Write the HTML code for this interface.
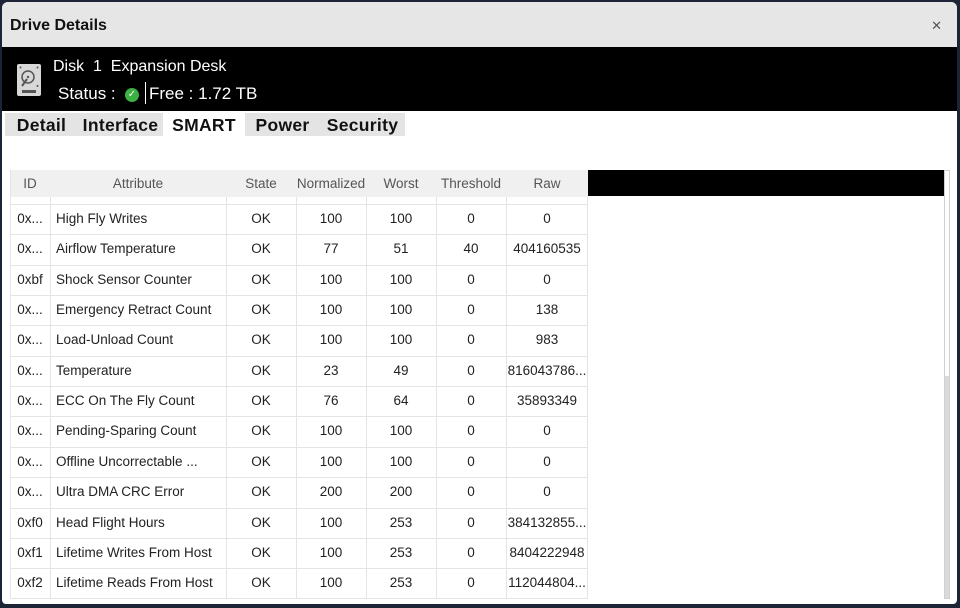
<!DOCTYPE html>
<html><head><style>
*{margin:0;padding:0;box-sizing:border-box}
body{width:960px;height:608px;background:#1c2436;position:relative;overflow:hidden;font-family:"Liberation Sans",sans-serif}
.win{position:absolute;left:2px;top:2px;width:955px;height:602px;background:#fff;border-radius:6px 6px 4px 4px;overflow:hidden}
.title{position:absolute;left:0;top:0;width:100%;height:45px;background:#e6e6e6;}
.title span{position:absolute;left:8px;top:15px;font-size:16px;font-weight:bold;color:#111}
.close{position:absolute;right:15px;top:16px;font-size:13px;color:#555}
.hdr{position:absolute;left:0;top:45px;width:100%;height:64px;background:#000;color:#fff}
.tabs{position:absolute;top:111px;height:23px;font-size:17.5px;font-weight:bold;color:#111}
.tab{position:absolute;top:0;height:23px;background:#e4e4e4;padding-top:2px;text-align:center;letter-spacing:0.3px}
.grid{position:absolute;left:0;top:0}
.c{position:absolute;font-size:13.5px;color:#222;text-align:center;white-space:nowrap}
.h{color:#555}
.vl{position:absolute;width:1px;background:#e4e4e4}
.hl{position:absolute;height:1px;background:#e4e4e4;left:10px;width:578px}
</style></head><body>
<div class="win">
<div class="title"><span>Drive Details</span><div class="close">✕</div></div>
<div class="hdr">
<svg style="position:absolute;left:14px;top:16px" width="26" height="34" viewBox="0 0 26 34"><rect x="1" y="1" width="24" height="32" rx="2" fill="#d8d8d8"/><circle cx="4.5" cy="4.5" r="1" fill="#555"/><circle cx="21.5" cy="4.5" r="1" fill="#555"/><circle cx="21.5" cy="23" r="1" fill="#555"/><circle cx="12" cy="14" r="6" fill="none" stroke="#555" stroke-width="1.5"/><circle cx="12" cy="14" r="1.2" fill="#555"/><path d="M11 16 L6 23" stroke="#555" stroke-width="2"/><rect x="6" y="27" width="14" height="3" fill="#555"/></svg>
<div style="position:absolute;left:51px;top:11px;font-size:16px">Disk&nbsp; 1&nbsp; Expansion Desk</div>
<div style="position:absolute;left:56px;top:37px;font-size:17px">Status :</div>
<div style="position:absolute;left:123px;top:41px;width:14px;height:14px;border-radius:50%;background:#3cb043;color:#fff;font-size:10px;line-height:14px;text-align:center">✓</div>
<div style="position:absolute;left:143px;top:35px;width:1px;height:22px;background:#fff"></div>
<div style="position:absolute;left:147px;top:37px;font-size:17px">Free : 1.72 TB</div>
</div>
<div class="tabs">
<div class="tab" style="left:3px;width:73px">Detail</div>
<div class="tab" style="left:76px;width:85px">Interface</div>
<div class="tab" style="left:161px;width:82px;background:#fff">SMART</div>
<div class="tab" style="left:243px;width:75px">Power</div>
<div class="tab" style="left:318px;width:85px">Security</div>
</div>
</div>
<div class="grid">
<div style="position:absolute;left:10px;top:170px;width:578px;height:27px;background:#f0f0f0"></div>
<div style="position:absolute;left:588px;top:170px;width:356px;height:26px;background:#000"></div>
<div style="position:absolute;left:944px;top:170px;width:6px;height:429px;border:1px solid #d0d0d0;background:#fff"></div>
<div style="position:absolute;left:945px;top:376px;width:4px;height:222px;background:#dadada"></div>
<div id="g"></div>
</div>
<script>
var cols=[10,50,226,296,366,436,506,588];
var rows=[["0x...","High Fly Writes","OK","100","100","0","0"],["0x...","Airflow Temperature","OK","77","51","40","404160535"],["0xbf","Shock Sensor Counter","OK","100","100","0","0"],["0x...","Emergency Retract Count","OK","100","100","0","138"],["0x...","Load-Unload Count","OK","100","100","0","983"],["0x...","Temperature","OK","23","49","0","816043786..."],["0x...","ECC On The Fly Count","OK","76","64","0","35893349"],["0x...","Pending-Sparing Count","OK","100","100","0","0"],["0x...","Offline Uncorrectable ...","OK","100","100","0","0"],["0x...","Ultra DMA CRC Error","OK","200","200","0","0"],["0xf0","Head Flight Hours","OK","100","253","0","384132855..."],["0xf1","Lifetime Writes From Host","OK","100","253","0","8404222948"],["0xf2","Lifetime Reads From Host","OK","100","253","0","112044804..."]];
var hd=["ID","Attribute","State","Normalized","Worst","Threshold","Raw"];
var h="";
for(var i=0;i<7;i++){var l=cols[i],w=cols[i+1]-l;h+='<div class="c h" style="left:'+l+'px;width:'+w+'px;top:176px">'+hd[i]+'</div>';}
for(var i=1;i<7;i++)h+='<div class="vl" style="left:'+cols[i]+'px;top:197px;height:402px"></div>';
h+='<div class="vl" style="left:10px;top:170px;height:429px"></div><div class="vl" style="left:587px;top:197px;height:402px"></div>';
for(var r=0;r<rows.length;r++){var y=204+r*30.35;h+='<div class="hl" style="top:'+y+'px"></div>';
for(var i=0;i<7;i++){var l=cols[i],w=cols[i+1]-l;var st=i==1?'text-align:left;padding-left:6px;':'';h+='<div class="c" style="'+st+'left:'+l+'px;width:'+w+'px;top:'+(y+7)+'px">'+rows[r][i]+'</div>';}}
h+='<div class="hl" style="top:598px"></div>';
document.getElementById("g").innerHTML=h;
</script>
</body></html>
